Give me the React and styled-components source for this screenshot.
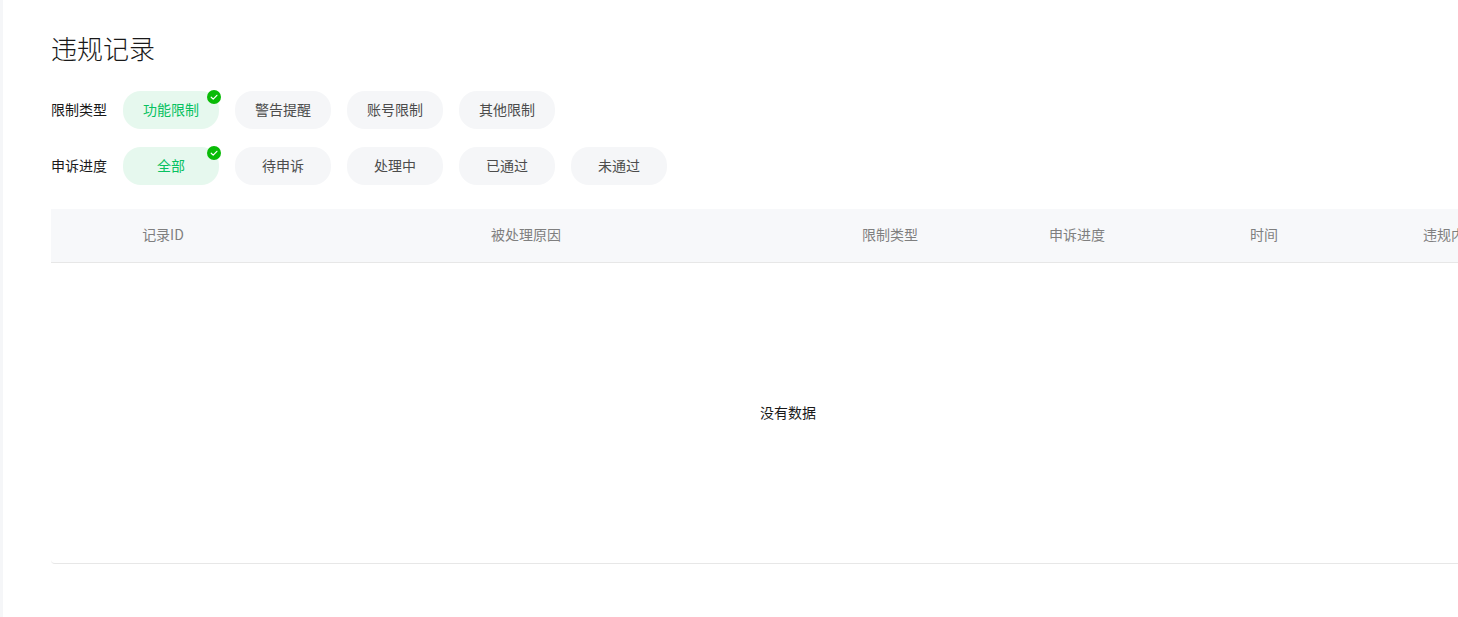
import React from 'react';
import styled, { createGlobalStyle } from 'styled-components';

const GlobalStyle = createGlobalStyle`
  html, body {
    margin: 0;
    height: 100%;
    overflow: hidden;
    background: #fff;
  }
  body {
    font-family: "Noto Sans CJK SC", "Liberation Sans", sans-serif;
    font-size: 14px;
    color: #191919;
  }
`;

const typeOptions = ['功能限制', '警告提醒', '账号限制', '其他限制'];
const progressOptions = ['全部', '待申诉', '处理中', '已通过', '未通过'];
const columns = ['记录ID', '被处理原因', '限制类型', '申诉进度', '时间', '违规内容'];

const Check = () => (
  <Badge>
    <svg width="14" height="14" viewBox="0 0 14 14" fill="none">
      <path d="M4.2 7.2 6.2 9.1 9.9 5.3" stroke="#fff" strokeWidth="1.2" strokeLinecap="round" strokeLinejoin="round" />
    </svg>
  </Badge>
);

const FilterRow = ({ label, options }) => (
  <Row>
    <RowLabel>{label}</RowLabel>
    {options.map((text, i) => (
      <Pill key={text} $active={i === 0}>
        {text}
        {i === 0 && <Check />}
      </Pill>
    ))}
  </Row>
);

const App = () => (
  <Page>
    <GlobalStyle />
    <Main>
      <Title>违规记录</Title>
      <Filters>
        <FilterRow label="限制类型" options={typeOptions} />
        <FilterRow label="申诉进度" options={progressOptions} />
      </Filters>
      <Table>
        <HeadRow>
          {columns.map((c) => (
            <HeadCell key={c}>{c}</HeadCell>
          ))}
        </HeadRow>
        <Empty>没有数据</Empty>
      </Table>
    </Main>
  </Page>
);

export default App;

const Page = styled.div`
  display: flex;
  height: 617px;
  border-left: 3px solid #f5f6f8;
  overflow: hidden;
`;
const Main = styled.main`
  flex: 0 0 1474px;
  min-width: 0;
  margin-left: 48px;
`;
const Title = styled.h1`
  margin: 0;
  padding-top: 30px;
  font-size: 26px;
  line-height: 36px;
  font-weight: 300;
`;
const Filters = styled.div`
  display: flex;
  flex-direction: column;
  gap: 18px;
  margin-top: 25px;
`;
const Row = styled.div`
  display: flex;
  align-items: center;
  gap: 16px;
`;
const RowLabel = styled.span`
  width: 56px;
  line-height: 20px;
  padding-bottom: 2px;
`;
const Pill = styled.div`
  position: relative;
  box-sizing: border-box;
  width: 96px;
  height: 38px;
  padding-bottom: 2px;
  display: flex;
  align-items: center;
  justify-content: center;
  border-radius: 18px;
  background: ${(p) => (p.$active ? '#e6f8ee' : '#f5f6f8')};
  color: ${(p) => (p.$active ? '#07c160' : '#4c4c4c')};
`;
const Badge = styled.span`
  position: absolute;
  top: -1px;
  right: -2px;
  width: 14px;
  height: 14px;
  border-radius: 50%;
  background: #09bb07;
  display: flex;
`;
const Table = styled.div`
  margin-top: 24px;
  border-bottom: 1px solid #e7e7e7;
  border-radius: 0 0 4px 4px;
`;
const HeadRow = styled.div`
  display: grid;
  grid-template-columns: 204.5px 541px repeat(4, 187px);
  box-sizing: border-box;
  height: 54px;
  padding-bottom: 3px;
  background: #f7f8fa;
  border-bottom: 1px solid #e7e7e7;
  color: #7f7f7f;
`;
const HeadCell = styled.div`
  display: flex;
  align-items: center;
  justify-content: center;
  white-space: nowrap;
  &:first-child {
    padding-left: 19.5px;
  }
`;
const Empty = styled.div`
  box-sizing: border-box;
  height: 300px;
  padding-bottom: 2px;
  display: flex;
  align-items: center;
  justify-content: center;
`;
